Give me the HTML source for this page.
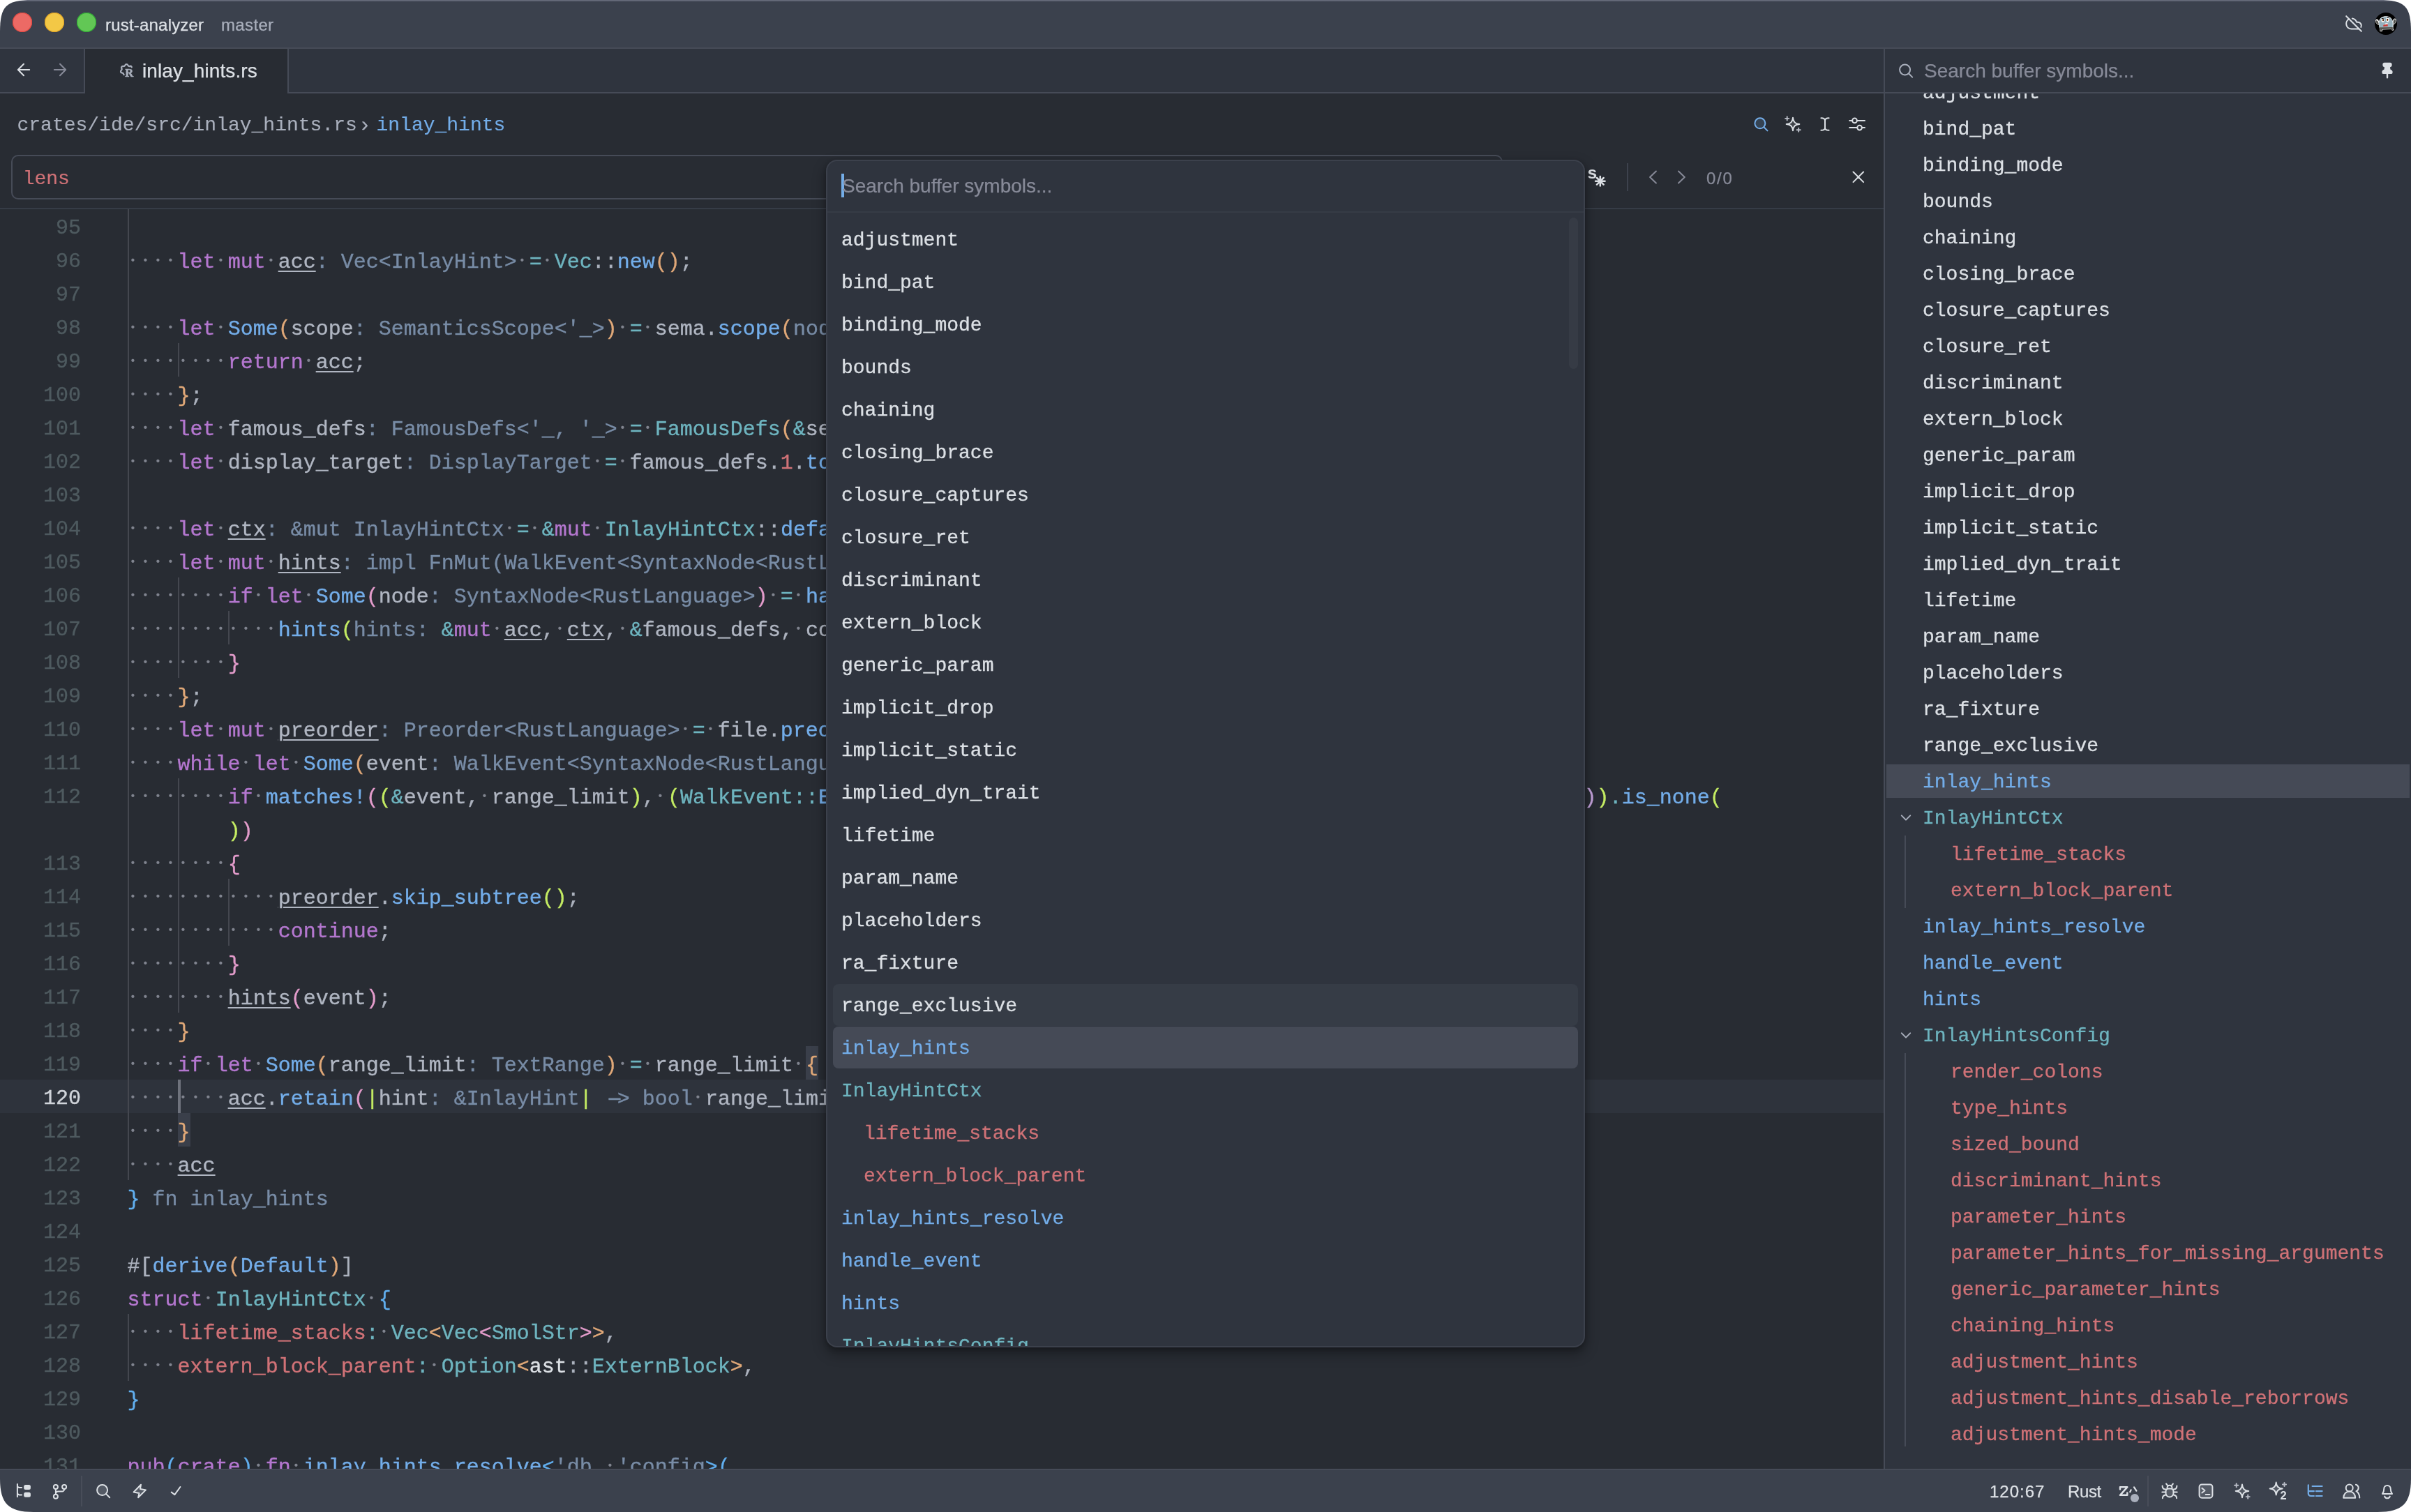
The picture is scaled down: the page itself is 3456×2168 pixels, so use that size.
<!DOCTYPE html>
<html lang="en"><head><meta charset="utf-8"><title>rust-analyzer — inlay_hints.rs</title>
<style>
*{box-sizing:border-box;margin:0;padding:0}
html{background:#fff;font-family:"Liberation Sans",sans-serif}
body{position:relative;width:3456px;height:2168px;overflow:hidden;background:#fff}
body{font-family:"Liberation Sans",sans-serif;color:#dce0e5;-webkit-font-smoothing:antialiased}
#win{position:absolute;left:0;top:0;width:3456px;height:2168px;overflow:hidden;background:#282c33;clip-path:path('M0 46C0 8.7 8.7 0 46 0H3410C3447.3 0 3456 8.7 3456 46V2120C3456 2156 3444 2168 3408 2168H48C12 2168 0 2156 0 2120Z');will-change:transform}
.abs{position:absolute}
.ic{position:absolute;overflow:visible}
.mono{font-family:"Liberation Mono",monospace;white-space:pre}
.sans{font-family:"Liberation Sans",sans-serif;white-space:pre}
.t{position:absolute;white-space:pre;line-height:1}
/* editor */
.ln{position:absolute;left:0;width:116px;text-align:right;font:30px/48px "Liberation Mono",monospace;color:#4e5a5f;height:48px;padding-top:3px;-webkit-text-stroke:.35px currentColor}
.ln.act{color:#d0d4da}
.cl{position:absolute;left:182.6px;font:30px/48px "Liberation Mono",monospace;height:48px;white-space:pre;color:#acb2be;padding-top:4px;-webkit-text-stroke:.35px currentColor}
.k{color:#b477cf}.f{color:#73ade9}.ty{color:#6eb4bf}.h{color:#788ca6}.o{color:#6eb4bf}
.p{color:#acb2be}.v{color:#b0b6c2}.pr{color:#d07277}.ns{color:#dce0e5}
.w{background:radial-gradient(circle at 7.4px calc(50% - 3.2px),#80848f 0,#80848f 1.6px,rgba(128,132,143,0) 2.6px) 0 0/18.003px 100% repeat-x}
.u{text-decoration:underline;text-decoration-thickness:2px;text-underline-offset:4px}
.b0{color:#61afef}.b1{color:#e0a878}.b2{color:#e39ccb}.b3{color:#c4ec63}.b4{color:#c5a3dc}
.arw{display:inline-block;transform:translateX(5px) scaleX(2)}
.ig{position:absolute;width:2px;background:#44474f}
/* lists */
.ol{position:absolute;font:28px/52px "Liberation Mono",monospace;height:52px;white-space:pre;color:#dce0e5;-webkit-text-stroke:.3px currentColor}
.ml{position:absolute;font:28px/60px "Liberation Mono",monospace;height:60px;white-space:pre;color:#dce0e5;-webkit-text-stroke:.3px currentColor}
.cf{color:#73ade9}.ct{color:#6eb4bf}.cp{color:#d07277}
</style></head>
<body>
<div id="win">
<!-- editor -->
<div class="abs" id="editor" style="left:0;top:300px;width:2700px;height:1806px;background:#282c33;overflow:hidden">
<div class="abs" style="left:0;top:1248px;width:2700px;height:48px;background:#2e333c"></div>
<div class="ig" style="left:183px;top:0px;height:1392px"></div><div class="ig" style="left:183px;top:1584px;height:96px"></div><div class="ig" style="left:255px;top:192px;height:48px"></div><div class="ig" style="left:255px;top:528px;height:144px"></div><div class="ig" style="left:255px;top:816px;height:336px"></div><div class="ig" style="left:327px;top:576px;height:48px"></div><div class="ig" style="left:327px;top:960px;height:96px"></div><div class="ig" style="left:255px;top:1248px;height:48px;width:4px;background:#6f737d"></div>
<div class="abs" style="left:1155px;top:1200px;width:18px;height:48px;background:#3a3f4a"></div><div class="abs" style="left:255px;top:1296px;width:18px;height:48px;background:#3a3f4a"></div>
<div class="ln" style="top:0px">95</div>
<div class="ln" style="top:48px">96</div><div class="cl" style="top:48px"><span class="w">    </span><span class="k">let</span><span class="w"> </span><span class="k">mut</span><span class="w"> </span><span class="v u">acc</span><span class="h">: Vec&lt;InlayHint&gt;</span><span class="w"> </span><span class="o">=</span><span class="w"> </span><span class="ty">Vec</span><span class="p">::</span><span class="f">new</span><span class="b1">()</span><span class="p">;</span></div>
<div class="ln" style="top:96px">97</div>
<div class="ln" style="top:144px">98</div><div class="cl" style="top:144px"><span class="w">    </span><span class="k">let</span><span class="w"> </span><span class="f">Some</span><span class="b1">(</span><span class="v">scope</span><span class="h">: SemanticsScope&lt;'_&gt;</span><span class="b1">)</span><span class="w"> </span><span class="o">=</span><span class="w"> </span><span class="v">sema</span><span class="p">.</span><span class="f">scope</span><span class="b1">(</span><span class="h">node: </span><span class="v">file</span><span class="b1">)</span><span class="w"> </span><span class="k">else</span><span class="w"> </span><span class="b1">{</span></div>
<div class="ln" style="top:192px">99</div><div class="cl" style="top:192px"><span class="w">        </span><span class="k">return</span><span class="w"> </span><span class="v u">acc</span><span class="p">;</span></div>
<div class="ln" style="top:240px">100</div><div class="cl" style="top:240px"><span class="w">    </span><span class="b1">}</span><span class="p">;</span></div>
<div class="ln" style="top:288px">101</div><div class="cl" style="top:288px"><span class="w">    </span><span class="k">let</span><span class="w"> </span><span class="v">famous_defs</span><span class="h">: FamousDefs&lt;'_, '_&gt;</span><span class="w"> </span><span class="o">=</span><span class="w"> </span><span class="ty">FamousDefs</span><span class="b1">(</span><span class="o">&amp;</span><span class="v">sema</span><span class="p">,</span><span class="w"> </span><span class="v">scope</span><span class="p">.</span><span class="f">krate</span><span class="b2">()</span><span class="b1">)</span><span class="p">;</span></div>
<div class="ln" style="top:336px">102</div><div class="cl" style="top:336px"><span class="w">    </span><span class="k">let</span><span class="w"> </span><span class="v">display_target</span><span class="h">: DisplayTarget</span><span class="w"> </span><span class="o">=</span><span class="w"> </span><span class="v">famous_defs</span><span class="p">.</span><span class="pr">1</span><span class="p">.</span><span class="f">to_display_target</span><span class="b1">(</span><span class="h">db: </span><span class="v">sema</span><span class="p">.</span><span class="pr">db</span><span class="b1">)</span><span class="p">;</span></div>
<div class="ln" style="top:384px">103</div>
<div class="ln" style="top:432px">104</div><div class="cl" style="top:432px"><span class="w">    </span><span class="k">let</span><span class="w"> </span><span class="v u">ctx</span><span class="h">: &amp;mut InlayHintCtx</span><span class="w"> </span><span class="o">=</span><span class="w"> </span><span class="o">&amp;</span><span class="k">mut</span><span class="w"> </span><span class="ty">InlayHintCtx</span><span class="p">::</span><span class="f">default</span><span class="b1">()</span><span class="p">;</span></div>
<div class="ln" style="top:480px">105</div><div class="cl" style="top:480px"><span class="w">    </span><span class="k">let</span><span class="w"> </span><span class="k">mut</span><span class="w"> </span><span class="v u">hints</span><span class="h">: impl FnMut(WalkEvent&lt;SyntaxNode&lt;RustLanguage&gt;&gt;)</span><span class="w"> </span><span class="o">=</span><span class="w"> </span><span class="b1">|</span><span class="v">event</span><span class="h">: WalkEvent&lt;SyntaxNode&lt;RustLanguage&gt;&gt;</span><span class="b1">|</span><span class="w"> </span><span class="b1">{</span></div>
<div class="ln" style="top:528px">106</div><div class="cl" style="top:528px"><span class="w">        </span><span class="k">if</span><span class="w"> </span><span class="k">let</span><span class="w"> </span><span class="f">Some</span><span class="b2">(</span><span class="v">node</span><span class="h">: SyntaxNode&lt;RustLanguage&gt;</span><span class="b2">)</span><span class="w"> </span><span class="o">=</span><span class="w"> </span><span class="f">handle_event</span><span class="b2">(</span><span class="v u">ctx</span><span class="p">,</span><span class="w"> </span><span class="v">event</span><span class="b2">)</span><span class="w"> </span><span class="b2">{</span></div>
<div class="ln" style="top:576px">107</div><div class="cl" style="top:576px"><span class="w">            </span><span class="f">hints</span><span class="b3">(</span><span class="h">hints: </span><span class="o">&amp;</span><span class="k">mut</span><span class="w"> </span><span class="v u">acc</span><span class="p">,</span><span class="w"> </span><span class="v u">ctx</span><span class="p">,</span><span class="w"> </span><span class="o">&amp;</span><span class="v">famous_defs</span><span class="p">,</span><span class="w"> </span><span class="v">config</span><span class="p">,</span><span class="w"> </span><span class="v">file_id</span><span class="p">,</span><span class="w"> </span><span class="v">display_target</span><span class="p">,</span><span class="w"> </span><span class="v">node</span><span class="b3">)</span><span class="p">;</span></div>
<div class="ln" style="top:624px">108</div><div class="cl" style="top:624px"><span class="w">        </span><span class="b2">}</span></div>
<div class="ln" style="top:672px">109</div><div class="cl" style="top:672px"><span class="w">    </span><span class="b1">}</span><span class="p">;</span></div>
<div class="ln" style="top:720px">110</div><div class="cl" style="top:720px"><span class="w">    </span><span class="k">let</span><span class="w"> </span><span class="k">mut</span><span class="w"> </span><span class="v u">preorder</span><span class="h">: Preorder&lt;RustLanguage&gt;</span><span class="w"> </span><span class="o">=</span><span class="w"> </span><span class="v">file</span><span class="p">.</span><span class="f">preorder</span><span class="b1">()</span><span class="p">;</span></div>
<div class="ln" style="top:768px">111</div><div class="cl" style="top:768px"><span class="w">    </span><span class="k">while</span><span class="w"> </span><span class="k">let</span><span class="w"> </span><span class="f">Some</span><span class="b1">(</span><span class="v">event</span><span class="h">: WalkEvent&lt;SyntaxNode&lt;RustLanguage&gt;&gt;</span><span class="b1">)</span><span class="w"> </span><span class="o">=</span><span class="w"> </span><span class="v u">preorder</span><span class="p">.</span><span class="f">next</span><span class="b1">()</span><span class="w"> </span><span class="b1">{</span></div>
<div class="ln" style="top:816px">112</div><div class="cl" style="top:816px"><span class="w">        </span><span class="k">if</span><span class="w"> </span><span class="f">matches!</span><span class="b2">(</span><span class="b3">(</span><span class="o">&amp;</span><span class="v">event</span><span class="p">,</span><span class="w"> </span><span class="v">range_limit</span><span class="b3">)</span><span class="p">,</span><span class="w"> </span><span class="b3">(</span><span class="ty">WalkEvent</span><span class="o">::</span><span class="f">Enter</span><span class="b4">(</span><span class="v">node</span><span class="b4">)</span><span class="p">,</span><span class="w"> </span><span class="f">Some</span><span class="b4">(</span><span class="v">range</span><span class="b4">)</span><span class="b3">)</span><span class="w"> </span><span class="k">if</span><span class="w"> </span><span class="v">range</span><span class="o">.</span><span class="f">intersect</span><span class="b3">(</span><span class="v">node</span><span class="o">.</span><span class="f">text_range</span><span class="b4">(</span></div><div class="cl" style="top:816px;left:2270.6px"><span class="b4">)</span><span class="b3">)</span><span class="o">.</span><span class="f">is_none</span><span class="b3">(</span></div>
<div class="cl" style="top:864px">        <span class="b3">)</span><span class="b2">)</span></div>
<div class="ln" style="top:912px">113</div><div class="cl" style="top:912px"><span class="w">        </span><span class="b2">{</span></div>
<div class="ln" style="top:960px">114</div><div class="cl" style="top:960px"><span class="w">            </span><span class="v u">preorder</span><span class="p">.</span><span class="f">skip_subtree</span><span class="b3">()</span><span class="p">;</span></div>
<div class="ln" style="top:1008px">115</div><div class="cl" style="top:1008px"><span class="w">            </span><span class="k">continue</span><span class="p">;</span></div>
<div class="ln" style="top:1056px">116</div><div class="cl" style="top:1056px"><span class="w">        </span><span class="b2">}</span></div>
<div class="ln" style="top:1104px">117</div><div class="cl" style="top:1104px"><span class="w">        </span><span class="v u">hints</span><span class="b2">(</span><span class="v">event</span><span class="b2">)</span><span class="p">;</span></div>
<div class="ln" style="top:1152px">118</div><div class="cl" style="top:1152px"><span class="w">    </span><span class="b1">}</span></div>
<div class="ln" style="top:1200px">119</div><div class="cl" style="top:1200px"><span class="w">    </span><span class="k">if</span><span class="w"> </span><span class="k">let</span><span class="w"> </span><span class="f">Some</span><span class="b1">(</span><span class="v">range_limit</span><span class="h">: TextRange</span><span class="b1">)</span><span class="w"> </span><span class="o">=</span><span class="w"> </span><span class="v">range_limit</span><span class="w"> </span><span class="b1 hl">{</span></div>
<div class="ln act" style="top:1248px">120</div><div class="cl" style="top:1248px"><span class="w">        </span><span class="v u">acc</span><span class="p">.</span><span class="f">retain</span><span class="b2">(</span><span class="b3">|</span><span class="v">hint</span><span class="h">: &amp;InlayHint</span><span class="b3">|</span><span class="h"> </span><span class="h arw">-</span><span class="h">&gt; bool</span><span class="w"> </span><span class="v">range_limit</span><span class="p">.</span><span class="f">contains_range</span><span class="b3">(</span><span class="v">hint</span><span class="p">.</span><span class="pr">range</span><span class="b3">)</span><span class="b2">)</span><span class="p">;</span></div>
<div class="ln" style="top:1296px">121</div><div class="cl" style="top:1296px"><span class="w">    </span><span class="b1 hl">}</span></div>
<div class="ln" style="top:1344px">122</div><div class="cl" style="top:1344px"><span class="w">    </span><span class="v u">acc</span></div>
<div class="ln" style="top:1392px">123</div><div class="cl" style="top:1392px"><span class="b0">}</span><span class="h"> fn inlay_hints</span></div>
<div class="ln" style="top:1440px">124</div>
<div class="ln" style="top:1488px">125</div><div class="cl" style="top:1488px"><span class="p">#[</span><span class="f">derive</span><span class="b1">(</span><span class="f">Default</span><span class="b1">)</span><span class="p">]</span></div>
<div class="ln" style="top:1536px">126</div><div class="cl" style="top:1536px"><span class="k">struct</span><span class="w"> </span><span class="ty">InlayHintCtx</span><span class="w"> </span><span class="b0">{</span></div>
<div class="ln" style="top:1584px">127</div><div class="cl" style="top:1584px"><span class="w">    </span><span class="pr">lifetime_stacks</span><span class="o">:</span><span class="w"> </span><span class="ty">Vec</span><span class="b1">&lt;</span><span class="ty">Vec</span><span class="b2">&lt;</span><span class="ty">SmolStr</span><span class="b2">&gt;</span><span class="b1">&gt;</span><span class="p">,</span></div>
<div class="ln" style="top:1632px">128</div><div class="cl" style="top:1632px"><span class="w">    </span><span class="pr">extern_block_parent</span><span class="o">:</span><span class="w"> </span><span class="ty">Option</span><span class="b1">&lt;</span><span class="ns">ast</span><span class="p">::</span><span class="ty">ExternBlock</span><span class="b1">&gt;</span><span class="p">,</span></div>
<div class="ln" style="top:1680px">129</div><div class="cl" style="top:1680px"><span class="b0">}</span></div>
<div class="ln" style="top:1728px">130</div>
<div class="ln" style="top:1776px">131</div><div class="cl" style="top:1776px"><span class="k">pub</span><span class="b0">(</span><span class="k">crate</span><span class="b0">)</span><span class="w"> </span><span class="k">fn</span><span class="w"> </span><span class="f">inlay_hints_resolve</span><span class="b0">&lt;</span><span class="h">'db</span><span class="p">,</span><span class="w"> </span><span class="h">'config</span><span class="b0">&gt;</span><span class="b0">(</span></div>
</div>
<!-- title bar -->
<div class="abs" id="titlebar" style="left:0;top:0;width:3456px;height:70px;background:#3b414d;border-bottom:2px solid #464b57"></div>
<div class="abs" style="left:0;top:0;width:3456px;height:2px;background:linear-gradient(#6b7080,#555a68)"></div>
<div class="abs" style="left:18px;top:18px;width:28px;height:28px;border-radius:50%;background:#ec6a65;box-shadow:inset 0 0 0 1px #e2463f"></div><div class="abs" style="left:64px;top:18px;width:28px;height:28px;border-radius:50%;background:#f3c846;box-shadow:inset 0 0 0 1px #dfa123"></div><div class="abs" style="left:110px;top:18px;width:28px;height:28px;border-radius:50%;background:#62c755;box-shadow:inset 0 0 0 1px #2aa931"></div>
<div class="t" style="left:151px;top:19px;height:34px;line-height:34px;font-family:'Liberation Sans',sans-serif;font-size:24px;color:#dce0e5;letter-spacing:0.2px;-webkit-text-stroke:0.25px currentColor;">rust-analyzer</div>
<div class="t" style="left:317px;top:19px;height:34px;line-height:34px;font-family:'Liberation Sans',sans-serif;font-size:24px;color:#a9afbc;letter-spacing:0.35px;-webkit-text-stroke:0.25px currentColor;">master</div>
<svg class="ic" style="left:3361px;top:21px;width:26px;height:26px;color:#dce0e5" viewBox="0 0 24 24" fill="none" stroke="currentColor" stroke-width="1.85" stroke-linecap="round" stroke-linejoin="round" ><path d="m2 2 20 20"/><path d="M5.78 5.78A7 7 0 0 0 9 19h8.5a4.5 4.5 0 0 0 1.3-.19"/><path d="M21.53 16.5A4.5 4.5 0 0 0 17.5 10h-1.79A7 7 0 0 0 10 5.07"/></svg>
<svg class="ic" style="left:3404.2px;top:17.8px;width:32px;height:32px" viewBox="0 0 32 32">
<circle cx="16" cy="16" r="16" fill="#000"/>
<path d="M6 12.5C7.5 7.5 11 5.2 16 5.2s8.3 2.4 9.8 6.8c.5-2.3 1.6-3.6 3-3.6 1.6 0 2.3 1.7 2.1 3.8-.3 2.3-1.9 4.2-4.1 5.1l-.4 5.5 1.2 2.4-2.6.5-1.2-1.7-12.3.6-.8 2.3-3.2.1-.6-4-1-5c-2.4-1-4.2-2.6-4.8-4.8-.5-1.9.2-3.4 1.6-3.6 1.4-.2 2.7.8 3.3 2.9z" fill="#fff"/>
<path d="M6.3 21.6V15c0-5.5 4-9.1 9.7-9.1s9.7 3.6 9.7 9.1v6.6z" fill="#98b1bc"/>
<path d="M1.9 11.4c1.2-.4 2.7.9 3.3 2.8l.7 3.3c-2-.6-3.6-2.1-4.2-3.9-.3-1.1-.2-1.9.2-2.2zM28.7 9.4c1.2 0 1.7 1.3 1.5 3-.2 1.8-1.5 3.4-3.4 4.2l-.2-3.7c.4-2 1.2-3.5 2.1-3.5z" fill="#53534f"/>
<path d="M6.5 21.3l19.2-.3.2 1.3-.2 1.7 1 .9-1.8.3-1.2-1.8-13 .6-.3 2-2.6.1-.4-2.6z" fill="#53534f"/>
<ellipse cx="11.7" cy="11" rx="2.2" ry="3.1" fill="#fff"/><ellipse cx="18.4" cy="10.4" rx="2.2" ry="3.1" fill="#fff"/>
<ellipse cx="12" cy="10.8" rx="1.1" ry="1.6" fill="#a5501c"/><ellipse cx="18.3" cy="10.3" rx="1.1" ry="1.6" fill="#a5501c"/>
<ellipse cx="12.1" cy="10.9" rx=".5" ry="1" fill="#000"/><ellipse cx="18.3" cy="10.3" rx=".5" ry="1" fill="#000"/>
<path d="M10 8.1l3.3.5v.8l-3.3-.5zM18 7.1l2.8.2v.7l-2.8-.1z" fill="#000"/>
<path d="M14.6 15.7c1.3-.6 2.9-.7 4.2-.3l.1 1.2-4.2.8z" fill="#fff"/>
<path d="M12.8 17.7l5.6-1.3.5 3-6.6.6c-.3-.9-.1-1.7.5-2.3z" fill="#cf3a35"/>
</svg>
<!-- tab bar -->
<div class="abs" id="tabbar" style="left:0;top:70px;width:2700px;height:64px;background:#2f343e;border-bottom:2px solid #464b57"></div>
<div class="abs" style="left:120px;top:70px;width:2px;height:64px;background:#464b57"></div>
<div class="abs" id="tab" style="left:122px;top:70px;width:292px;height:64px;background:#282c33;border-right:2px solid #464b57"></div>
<svg class="ic" style="left:20px;top:86px;width:28px;height:28px;color:#dce0e5" viewBox="0 0 24 24" fill="none" stroke="currentColor" stroke-width="1.75" stroke-linecap="round" stroke-linejoin="round" ><path d="M19 12H5M12 19l-7-7 7-7"/></svg><svg class="ic" style="left:72px;top:86px;width:28px;height:28px;color:#878a98" viewBox="0 0 24 24" fill="none" stroke="currentColor" stroke-width="1.75" stroke-linecap="round" stroke-linejoin="round" ><path d="M5 12h14M12 5l7 7-7 7"/></svg>
<svg class="ic" style="left:166px;top:86px;width:32px;height:28px;" viewBox="166 86 32 28" fill="none" stroke-linecap="round" stroke-linejoin="round"><g stroke="#a9afbc" stroke-width="2.5"><path transform="translate(181.5 100) scale(.93) translate(-181.5 -99)" d="M177.3 106.7c-.7-2.1-1.6-2.7-2.9-2.9-1.6-.3-2.3-1.4-1.8-2.9.4-1.1 1.4-1.7 1.5-2.7.1-1.1-.8-1.7-.6-2.9.3-1.4 1.6-2.1 2.9-1.7 1 .3 1.9-.1 2.4-1 .6-1.1 1.1-2 2.5-2s1.9.9 2.5 2c.5.9 1.4 1.3 2.4 1 1.3-.4 2.6.1 3.1 1.3"/></g><text x="179.3" y="109.9" font-family="Liberation Serif,serif" font-weight="700" font-size="16.5" fill="#a9afbc" stroke="#a9afbc" stroke-width=".5">R</text></svg>
<div class="t" style="left:204px;top:81.5px;height:39px;line-height:39px;font-family:'Liberation Sans',sans-serif;font-size:28px;color:#dce0e5;letter-spacing:0.1px;-webkit-text-stroke:0.25px currentColor;">inlay_hints.rs</div>
<!-- toolbar -->
<div class="t" style="left:24.5px;top:160.1px;height:39px;line-height:39px;font-family:'Liberation Mono',monospace;font-size:28px;color:#a9afbc;-webkit-text-stroke:0.15px currentColor;">crates/ide/src/inlay_hints.rs</div>
<div class="t" style="left:518px;top:157px;height:42px;line-height:42px;font-family:'Liberation Sans',sans-serif;font-size:30px;color:#a9afbc;-webkit-text-stroke:0.25px currentColor;">›</div>
<div class="t" style="left:539.5px;top:160.1px;height:39px;line-height:39px;font-family:'Liberation Mono',monospace;font-size:28px;color:#73ade9;-webkit-text-stroke:0.15px currentColor;">inlay_hints</div>
<svg class="ic" style="left:2500px;top:160px;width:190px;height:40px;" viewBox="2500 160 190 40" fill="none" stroke-linecap="round" stroke-linejoin="round"><g stroke="#74ade8" stroke-width="2"><circle cx="2522.9" cy="176.8" r="7.5" fill="#74ade8" fill-opacity="0.18"/><path d="M2528.4 182.3L2533.5 187.4"/></g><g stroke="#dce0e5" stroke-width="2"><path d="M2570 168.7Q2570.5 177.5 2579.3 178Q2570.5 178.5 2570 187.3Q2569.5 178.5 2560.7 178Q2569.5 177.5 2570 168.7Z" fill="#dce0e5" fill-opacity=".14"/></g><g stroke="#b9bdc7" stroke-width="1.9"><path d="M2559.1 169.9H2564.2999999999997M2561.7 167.3V172.5M2575.6 186.2H2580.7999999999997M2578.2 183.6V188.79999999999998"/></g><g stroke="#dce0e5" stroke-width="2"><path d="M2610.4 169.2c3.4 0 5.6 1.2 5.6 3.6V183.20000000000002c0 2.4-2.2 3.6-5.6 3.6M2621.6 169.2c-3.4 0-5.6 1.2-5.6 3.6M2616 183.20000000000002c0 2.4 2.2 3.6 5.6 3.6"/></g><g stroke="#dce0e5" stroke-width="2"><path d="M2651.2 172.9H2673M2651.2 183.1H2673"/><circle cx="2658.5" cy="172.9" r="3.3" fill="#282c33"/><circle cx="2665.6" cy="183.1" r="3.3" fill="#282c33"/></g></svg>
<!-- buffer search -->
<div class="abs" style="left:16px;top:222px;width:2138px;height:64px;border:2px solid #464b57;border-radius:10px;background:#282c33"></div>
<div class="t" style="left:32.7px;top:236.7px;height:39px;line-height:39px;font-family:'Liberation Mono',monospace;font-size:28px;color:#d07277;-webkit-text-stroke:0.2px currentColor;">lens</div>
<svg class="ic" style="left:2270px;top:230px;width:410px;height:50px;" viewBox="2270 230 410 50" fill="none" stroke-linecap="round" stroke-linejoin="round"><text x="2275.4" y="255.8" font-family="Liberation Sans,sans-serif" font-weight="700" font-size="24.5" fill="#dce0e5">s</text><g stroke="#dce0e5" stroke-width="2.5"><path d="M2293.8 253v13.6M2287 259.8h13.6M2289 255l9.6 9.6M2298.6 255l-9.6 9.6"/></g><g stroke="#878a98" stroke-width="2"><path d="M2373.9 245.5L2365.1 254L2373.9 262.5"/></g><g stroke="#878a98" stroke-width="2"><path d="M2406 245.5L2414.8 254L2406 262.5"/></g><g stroke="#dce0e5" stroke-width="2"><path d="M2656.5 246.5L2671.1000000000004 261.1M2671.1000000000004 246.5L2656.5 261.1"/></g></svg>
<div class="abs" style="left:2332px;top:234px;width:2px;height:40px;background:#3d424d"></div>
<div class="t" style="left:2446px;top:239px;height:34px;line-height:34px;font-family:'Liberation Sans',sans-serif;font-size:24px;color:#878a98;letter-spacing:1.7px;-webkit-text-stroke:0.25px currentColor;">0/0</div>
<div class="abs" style="left:0;top:298px;width:2700px;height:2px;background:#363c46"></div>
<!-- outline panel -->
<div class="abs" id="panel" style="left:2700px;top:70px;width:756px;height:2036px;background:#2f343e;border-left:2px solid #464b57;overflow:hidden">
<div class="ol " style="left:54px;top:38px">adjustment</div>
<div class="ol " style="left:54px;top:90px">bind_pat</div>
<div class="ol " style="left:54px;top:142px">binding_mode</div>
<div class="ol " style="left:54px;top:194px">bounds</div>
<div class="ol " style="left:54px;top:246px">chaining</div>
<div class="ol " style="left:54px;top:298px">closing_brace</div>
<div class="ol " style="left:54px;top:350px">closure_captures</div>
<div class="ol " style="left:54px;top:402px">closure_ret</div>
<div class="ol " style="left:54px;top:454px">discriminant</div>
<div class="ol " style="left:54px;top:506px">extern_block</div>
<div class="ol " style="left:54px;top:558px">generic_param</div>
<div class="ol " style="left:54px;top:610px">implicit_drop</div>
<div class="ol " style="left:54px;top:662px">implicit_static</div>
<div class="ol " style="left:54px;top:714px">implied_dyn_trait</div>
<div class="ol " style="left:54px;top:766px">lifetime</div>
<div class="ol " style="left:54px;top:818px">param_name</div>
<div class="ol " style="left:54px;top:870px">placeholders</div>
<div class="ol " style="left:54px;top:922px">ra_fixture</div>
<div class="ol " style="left:54px;top:974px">range_exclusive</div>
<div class="abs" style="left:2px;top:1026px;width:750px;height:48px;background:#454a56"></div><div class="ol cf" style="left:54px;top:1026px">inlay_hints</div>
<svg class="ic" style="left:16px;top:1086px;width:28px;height:32px;" viewBox="16 1086 28 32" fill="none" stroke-linecap="round" stroke-linejoin="round"><g stroke="#a9afbc" stroke-width="2"><path d="M23.8 1099.4L30 1105.6L36.2 1099.4"/></g></svg>
<div class="ol ct" style="left:54px;top:1078px">InlayHintCtx</div>
<div class="ol cp" style="left:94px;top:1130px">lifetime_stacks</div>
<div class="ol cp" style="left:94px;top:1182px">extern_block_parent</div>
<div class="ol cf" style="left:54px;top:1234px">inlay_hints_resolve</div>
<div class="ol cf" style="left:54px;top:1286px">handle_event</div>
<div class="ol cf" style="left:54px;top:1338px">hints</div>
<svg class="ic" style="left:16px;top:1398px;width:28px;height:32px;" viewBox="16 1398 28 32" fill="none" stroke-linecap="round" stroke-linejoin="round"><g stroke="#a9afbc" stroke-width="2"><path d="M23.8 1411.4L30 1417.6L36.2 1411.4"/></g></svg>
<div class="ol ct" style="left:54px;top:1390px">InlayHintsConfig</div>
<div class="ol cp" style="left:94px;top:1442px">render_colons</div>
<div class="ol cp" style="left:94px;top:1494px">type_hints</div>
<div class="ol cp" style="left:94px;top:1546px">sized_bound</div>
<div class="ol cp" style="left:94px;top:1598px">discriminant_hints</div>
<div class="ol cp" style="left:94px;top:1650px">parameter_hints</div>
<div class="ol cp" style="left:94px;top:1702px">parameter_hints_for_missing_arguments</div>
<div class="ol cp" style="left:94px;top:1754px">generic_parameter_hints</div>
<div class="ol cp" style="left:94px;top:1806px">chaining_hints</div>
<div class="ol cp" style="left:94px;top:1858px">adjustment_hints</div>
<div class="ol cp" style="left:94px;top:1910px">adjustment_hints_disable_reborrows</div>
<div class="ol cp" style="left:94px;top:1962px">adjustment_hints_mode</div>
<div class="abs" style="left:28px;top:1128px;width:2px;height:104px;background:#464b57"></div><div class="abs" style="left:28px;top:1440px;width:2px;height:564px;background:#464b57"></div>
<div class="abs" style="left:0;top:0;width:756px;height:64px;background:#2f343e;border-bottom:2px solid #464b57"></div>
<div class="t" style="left:56px;top:11.5px;height:39px;line-height:39px;font-family:'Liberation Sans',sans-serif;font-size:28px;color:#878a98;-webkit-text-stroke:0.25px currentColor;">Search buffer symbols...</div>
</div>
<svg class="ic" style="left:2710px;top:80px;width:740px;height:44px;" viewBox="2710 80 740 44" fill="none" stroke-linecap="round" stroke-linejoin="round"><g stroke="#a9afbc" stroke-width="2"><circle cx="2730.6" cy="100" r="7.5" fill="#a9afbc" fill-opacity="0"/><path d="M2736.1 105.5L2741.2 110.6"/></g><path d="M3418 89.7h8a2.6 2.6 0 0 1 2.6 2.6v.9a3 3 0 0 1-2.6 3l.4 3.3c2 .9 3.2 2 3.2 3.6v.8a2.2 2.2 0 0 1-2.2 2.2h-4.2v5.2a1.2 1.2 0 0 1-2.4 0v-5.2h-4.2a2.2 2.2 0 0 1-2.2-2.2v-.8c0-1.6 1.2-2.7 3.2-3.6l.4-3.3a3 3 0 0 1-2.6-3v-.9a2.6 2.6 0 0 1 2.6-2.6z" fill="#dce0e5" stroke="none"/></svg>
<!-- status bar -->
<div class="abs" id="statusbar" style="left:0;top:2106px;width:3456px;height:62px;background:#3b414d;border-top:2px solid #464b57"></div>
<div class="abs" style="left:116px;top:2116px;width:2px;height:44px;background:#484d59"></div>
<div class="abs" style="left:3078px;top:2116px;width:2px;height:44px;background:#484d59"></div>
<svg class="ic" style="left:0px;top:2110px;width:300px;height:56px;" viewBox="0 2110 300 56" fill="none" stroke-linecap="round" stroke-linejoin="round"><g stroke="#dce0e5" stroke-width="2"><path d="M24.9 2128v18.2M24.9 2130.2c0 1.8 1.2 2.8 3 2.8h3.2M24.9 2140.6c0 1.8 1.2 2.8 3 2.8h3.2"/></g><rect x="34.2" y="2129" width="9.7" height="7.1" rx="2.5" fill="#dce0e5"/><rect x="34.2" y="2139.7" width="9.7" height="7.1" rx="2.5" fill="#dce0e5"/><g stroke="#dce0e5" stroke-width="2"><circle cx="79.9" cy="2131.9" r="3"/><circle cx="92.1" cy="2131.9" r="3"/><circle cx="79.9" cy="2145.8" r="3"/><path d="M79.9 2134.9v7.9M92.1 2134.9v.6a3 3 0 0 1-3 3h-5.7a3.5 3.5 0 0 0-3.5 3.5"/></g><g stroke="#dce0e5" stroke-width="2"><circle cx="146.6" cy="2136.6" r="7.5" fill="#dce0e5" fill-opacity="0.16"/><path d="M152.1 2142.1L157.2 2147.2"/></g><g stroke="#dce0e5" stroke-width="2"><path d="M202 2128.8L191.6 2139.5L199.5 2140.9L198.1 2147.2L209 2136.4L201 2134.9Z" fill="#dce0e5" fill-opacity=".16"/></g><g stroke="#dce0e5" stroke-width="2"><path d="M245.8 2139.6L250.4 2143.2L258.4 2132"/></g></svg>
<div class="t" style="left:2852px;top:2122px;height:34px;line-height:34px;font-family:'Liberation Sans',sans-serif;font-size:24px;color:#dce0e5;letter-spacing:1px;-webkit-text-stroke:0.25px currentColor;">120:67</div>
<div class="t" style="left:2964px;top:2122px;height:34px;line-height:34px;font-family:'Liberation Sans',sans-serif;font-size:24px;color:#dce0e5;letter-spacing:-0.4px;-webkit-text-stroke:0.25px currentColor;">Rust</div>
<svg class="ic" style="left:3020px;top:2110px;width:436px;height:56px;" viewBox="3020 2110 436 56" fill="none" stroke-linecap="round" stroke-linejoin="round"><g stroke="#dce0e5" stroke-width="2.5"><path d="M3039 2135.6v-3.3h10.3l-10.3 11.5h10.3v-3.3"/></g><g stroke="#dce0e5" stroke-width="2.3"><path d="M3059 2132.4l3.4 5.2M3054.6 2136.4l-1.3 2.9"/></g><circle cx="3060" cy="2148" r="6.1" fill="#a9afbc"/><g stroke="#dce0e5" stroke-width="2"><path d="M3104.5 2141v-2.5a4 4 0 0 1 4-4h3a4 4 0 0 1 4 4v2.5a5.5 5.5 0 0 1-11 0z" fill="#dce0e5" fill-opacity=".16"/><path d="M3106.5 2134.2v-1a3.5 3.5 0 0 1 7 0v1"/><path d="M3105.1 2127.5l1.9 2.3M3099.6 2130.4c0 3+1.6 5.1+4.8 5.1M3099.3 2139.5h5.1M3099.9 2148.3c0-2.6+1.8-4.5+4.6-4.8M3114.9 2127.5l-1.9 2.3M3120.4 2130.4c0 3-1.6 5.1-4.8 5.1M3120.7 2139.5h-5.1M3120.1 2148.3c0-2.6-1.8-4.5-4.6-4.8"/></g><g stroke="#dce0e5" stroke-width="2"><rect x="3152.6" y="2128.4" width="18.8" height="19.3" rx="3.6" fill="#dce0e5" fill-opacity=".16"/><path d="M3156.4 2133.9l4.1 3.3-4.1 3.3M3161.7 2142.9h5.7"/></g><g stroke="#dce0e5" stroke-width="2"><path d="M3214 2128.6Q3214.5 2137.4 3223.3 2137.9Q3214.5 2138.4 3214 2147.2000000000003Q3213.5 2138.4 3204.7 2137.9Q3213.5 2137.4 3214 2128.6Z" fill="#dce0e5" fill-opacity=".14"/></g><g stroke="#b9bdc7" stroke-width="1.9"><path d="M3203.1 2129.8H3208.2999999999997M3205.7 2127.2000000000003V2132.4M3219.6 2146.1H3224.7999999999997M3222.2 2143.5V2148.7"/></g><g stroke="#dce0e5" stroke-width="2"><path d="M3262.7 2125.5Q3263.2 2134 3271.7 2134.5Q3263.2 2135 3262.7 2143.5Q3262.2 2135 3253.7 2134.5Q3262.2 2134 3262.7 2125.5Z" fill="#dce0e5" fill-opacity=".16"/></g><g stroke="#b9bdc7" stroke-width="1.9"><path d="M3271.9 2128.5H3277.1M3274.5 2125.9V2131.1"/></g><text x="3268.4" y="2149.8" font-family="Liberation Sans,sans-serif" font-weight="700" font-size="16.5" fill="#dce0e5">2</text><g stroke="#74ade8" stroke-width="2.2"><path d="M3308.8 2129.4v12.1a3.5 3.5 0 0 0 3.5 3.5h4.6M3308.8 2138.1h8.1M3314.6 2131h14M3319.9 2138.1h8.7M3319.9 2145h8.7"/></g><g stroke="#dce0e5" stroke-width="2"><circle cx="3367.7" cy="2133.5" r="5"/><path d="M3359.2 2147.8c0-5.4 3.7-9.3 8.5-9.3s8.5 3.9 8.5 9.3z" fill="#dce0e5" fill-opacity=".16"/><path d="M3376.9 2128.7c2.3.7 3.8 2.5 3.8 4.8s-1.4 3.9-3.3 4.7c2.9 1.5 4.7 4.9 4.9 9.3"/></g><g stroke="#dce0e5" stroke-width="2"><path d="M3415 2142h14c-1.7-2-2.3-4.2-2.3-7.4a4.7 4.7 0 0 0-9.4 0c0 3.2-.6 5.4-2.3 7.4zM3418.2 2145.6a4 4 0 0 0 7.6 0"/></g></svg>
<!-- outline modal -->
<div class="abs" id="modal" style="left:1184px;top:229px;width:1088px;height:1703px;background:#2f343e;border:2px solid #3c414c;border-radius:16px;overflow:hidden;box-shadow:0 8px 18px 2px rgba(0,0,0,.3),0 3px 6px rgba(0,0,0,.22)">
<div class="abs" style="left:0;top:72px;width:1088px;height:2px;background:#363c46"></div>
<div class="abs" style="left:20px;top:18px;width:4px;height:34px;background:#74ade8"></div>
<div class="t" style="left:21px;top:16px;height:39px;line-height:39px;font-family:'Liberation Sans',sans-serif;font-size:28px;color:#878a98;-webkit-text-stroke:0.25px currentColor;">Search buffer symbols...</div>
<div class="ml " style="left:20px;top:84px">adjustment</div>
<div class="ml " style="left:20px;top:145px">bind_pat</div>
<div class="ml " style="left:20px;top:206px">binding_mode</div>
<div class="ml " style="left:20px;top:267px">bounds</div>
<div class="ml " style="left:20px;top:328px">chaining</div>
<div class="ml " style="left:20px;top:389px">closing_brace</div>
<div class="ml " style="left:20px;top:450px">closure_captures</div>
<div class="ml " style="left:20px;top:511px">closure_ret</div>
<div class="ml " style="left:20px;top:572px">discriminant</div>
<div class="ml " style="left:20px;top:633px">extern_block</div>
<div class="ml " style="left:20px;top:694px">generic_param</div>
<div class="ml " style="left:20px;top:755px">implicit_drop</div>
<div class="ml " style="left:20px;top:816px">implicit_static</div>
<div class="ml " style="left:20px;top:877px">implied_dyn_trait</div>
<div class="ml " style="left:20px;top:938px">lifetime</div>
<div class="ml " style="left:20px;top:999px">param_name</div>
<div class="ml " style="left:20px;top:1060px">placeholders</div>
<div class="ml " style="left:20px;top:1121px">ra_fixture</div>
<div class="abs" style="left:8px;top:1179.5px;width:1068px;height:60px;border-radius:8px;background:#363c46"></div><div class="ml " style="left:20px;top:1182px">range_exclusive</div>
<div class="abs" style="left:8px;top:1240.5px;width:1068px;height:60px;border-radius:8px;background:#454a56"></div><div class="ml cf" style="left:20px;top:1243px">inlay_hints</div>
<div class="ml ct" style="left:20px;top:1304px">InlayHintCtx</div>
<div class="ml cp" style="left:52px;top:1365px">lifetime_stacks</div>
<div class="ml cp" style="left:52px;top:1426px">extern_block_parent</div>
<div class="ml cf" style="left:20px;top:1487px">inlay_hints_resolve</div>
<div class="ml cf" style="left:20px;top:1548px">handle_event</div>
<div class="ml cf" style="left:20px;top:1609px">hints</div>
<div class="ml ct" style="left:20px;top:1670px">InlayHintsConfig</div>
<div class="abs" style="left:1063px;top:81px;width:13px;height:217px;border-radius:7px;background:#363b45"></div>
</div>
</div>
</body></html>
